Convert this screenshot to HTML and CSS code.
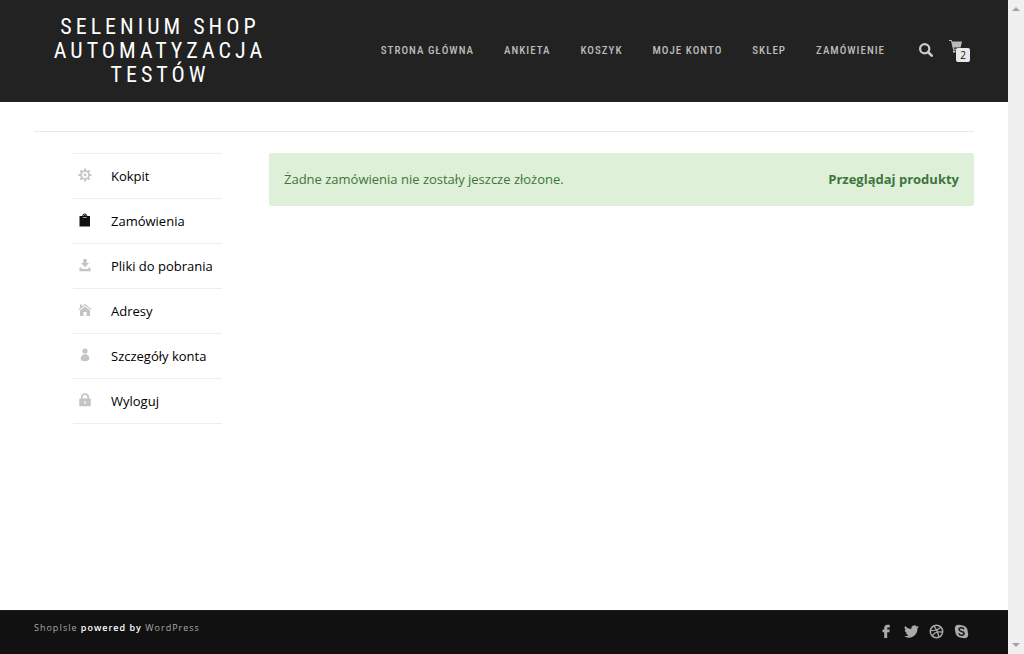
FILE: index.html
```html
<!DOCTYPE html>
<html lang="pl">
<head>
<meta charset="utf-8">
<meta name="viewport" content="width=device-width, initial-scale=1">
<title>Zamówienia – Selenium Shop Automatyzacja Testów</title>
<link rel="stylesheet" href="styles.css">
</head>
<body>
<div class="page">
  <header class="site-header">
    <div class="container header-row">
      <h1 class="brand"><a href="#">Selenium Shop Automatyzacja Testów</a></h1>
      <nav class="main-nav" aria-label="Menu główne">
        <a href="#">Strona główna</a>
        <a href="#">Ankieta</a>
        <a href="#">Koszyk</a>
        <a href="#">Moje konto</a>
        <a href="#">Sklep</a>
        <a href="#">Zamówienie</a>
      </nav>
      <div class="header-tools">
        <button class="search-button" type="button" aria-label="Szukaj">
          <svg width="14" height="14" viewBox="0 0 14 14" fill="none" stroke="currentColor"><circle cx="5.7" cy="5.7" r="4.6" stroke-width="2.2"/><path d="M9 9l3.700 3.700" stroke-width="2.6" stroke-linecap="round"/></svg>
        </button>
        <a class="cart" href="#" aria-label="Koszyk">
          <svg width="13" height="13" viewBox="0 0 13 13" fill="currentColor"><path d="M0 0h2.6l.6 1.5H13L11.6 7.400H4.800l.3 1.300h6.500v1H4.100L2 1.100H0z"/><circle cx="5.200" cy="11.500" r="1.300"/><circle cx="10.600" cy="11.500" r="1.300"/></svg>
          <span class="cart-count">2</span>
        </a>
      </div>
    </div>
  </header>

  <main class="container content">
    <hr class="divider">
    <div class="account">
      <nav class="account-nav" aria-label="Konto">
        <a href="#"><svg class="icon" viewBox="0 0 14 14" fill="none" stroke="currentColor"><circle cx="7" cy="7" r="4" stroke-width="1.700"/><circle cx="7" cy="7" r="1.400" fill="currentColor" stroke="none"/><path stroke-width="2" d="M7 .5v2M7 11.500v2M.5 7h2M11.500 7h2M2.400 2.400l1.400 1.400M10.200 10.200l1.400 1.400M11.600 2.400l-1.400 1.400M3.800 10.200l-1.400 1.400"/></svg>Kokpit</a>
        <a class="current" href="#" aria-current="page"><svg class="icon" viewBox="0 0 14 14" fill="currentColor"><path d="M1.500 3h2.800C4.500 1.500 5.500.5 6.800.5S9 1.500 9.300 3H12v10.500H1.500z"/><path d="M4.800 4.500h4M5.500 3c.3-2 2.300-2 2.600 0" fill="none" stroke="#bbb" stroke-width=".8"/></svg>Zamówienia</a>
        <a href="#"><svg class="icon" viewBox="0 0 14 14" fill="currentColor"><path d="M5.300 1h3.400v4h2.300L7 9.300 3 5h2.300zM1.500 9.500h2V11h7V9.500h2V13.300h-11z"/></svg>Pliki do pobrania</a>
        <a href="#"><svg class="icon" viewBox="0 0 14 14" fill="currentColor"><path d="M2 1.500h2v1.800L7 .8l6.600 5.400-.7.900L7 2.300 1.100 7.100l-.7-.9L2 4.900z"/><path d="M7 3.500l5 4.100V13H8.500V9h-3v4H2V7.600z"/></svg>Adresy</a>
        <a href="#"><svg class="icon" viewBox="0 0 14 14" fill="currentColor"><circle cx="7" cy="3" r="2.600"/><path d="M2.700 10.500C2.700 8 4.500 6.300 7 6.300s4.300 1.700 4.300 4.200c0 1.800-1.300 2.800-4.300 2.800s-4.300-1-4.300-2.800z"/></svg>Szczegóły konta</a>
        <a href="#"><svg class="icon" viewBox="0 0 14 14"><path d="M3.800 7V4.300C3.800 2.300 5.100 1 7 1s3.200 1.300 3.200 3.300V7" fill="none" stroke="currentColor" stroke-width="1.600"/><path fill="currentColor" fill-rule="evenodd" d="M1.300 5.500h11.500v7.800H1.300zM6.200 8.400v2.200h1.700V8.400z"/></svg>Wyloguj</a>
      </nav>
      <section class="notice" role="status">
        <span>Żadne zamówienia nie zostały jeszcze złożone.</span>
        <a href="#">Przeglądaj produkty</a>
      </section>
    </div>
  </main>

  <footer class="site-footer">
    <div class="container footer-row">
      <p class="credits"><a href="#">ShopIsle</a> powered by <a href="#">WordPress</a></p>
      <div class="social">
        <a href="#" aria-label="Facebook"><svg width="15" height="15" viewBox="0 0 15 15" fill="currentColor"><path d="M5.200 14V8.200H3.500V5.600h1.700V4C5.200 2 6.300.7 8.500.7h2.200v2.700H9.200c-.8 0-1 .3-1 1v1.200h2.500l-.3 2.600H8.200V14z"/></svg></a>
        <a href="#" aria-label="Twitter"><svg width="15" height="15" viewBox="0 0 24 24" fill="currentColor"><path d="M24 4.600a10 10 0 0 1-2.800.8 5 5 0 0 0 2.100-2.700 10 10 0 0 1-3.100 1.200 4.900 4.900 0 0 0-8.400 4.500A14 14 0 0 1 1.700 3.200a4.900 4.900 0 0 0 1.500 6.500 5 5 0 0 1-2.200-.6 4.900 4.900 0 0 0 3.900 4.900 5 5 0 0 1-2.200.1 4.900 4.900 0 0 0 4.600 3.400A10 10 0 0 1 0 19.500a14 14 0 0 0 21.500-12.400A10 10 0 0 0 24 4.600z"/></svg></a>
        <a href="#" aria-label="Dribbble"><svg width="15" height="15" viewBox="0 0 15 15" fill="none" stroke="currentColor" stroke-width="1.300"><circle cx="7.500" cy="7.500" r="6.200" stroke-width="1.500"/><path d="M5 1.900c2.600 3.200 4.100 6.600 4.900 11M1.400 6.700c4.300 0 8-.8 10.300-3.600M3.300 12C5 8.500 9 7.200 13.600 8.200"/></svg></a>
        <a href="#" aria-label="Skype"><svg width="15" height="15" viewBox="0 0 15 15" fill="currentColor"><circle cx="7.500" cy="7.500" r="6.200"/><circle cx="4.600" cy="4.600" r="3.800"/><circle cx="10.400" cy="10.400" r="3.800"/><path d="M10 5.400C9.600 4.200 8.700 3.800 7.500 3.800c-1.500 0-2.500.7-2.500 1.800 0 2.500 5.100 1.200 5.100 3.700 0 1.200-1.100 1.900-2.600 1.900-1.400 0-2.400-.6-2.700-1.800" fill="none" stroke="#111" stroke-width="1.400"/></svg></a>
      </div>
    </div>
  </footer>
</div>
<div class="scroll-track" aria-hidden="true">
  <svg width="8" height="4" viewBox="0 0 8 4"><path d="M0 4l4-4 4 4z"/></svg>
  <svg width="8" height="4" viewBox="0 0 8 4"><path d="M0 0h8L4 4z"/></svg>
</div>
</body>
</html>
```
FILE: styles.css
```css
* { box-sizing: border-box; }

body {
  display: flex;
  min-height: 100vh;
  margin: 0;
  background: #fff;
  color: #000;
  font: 13px/23px "Open Sans", sans-serif;
}

a { color: inherit; text-decoration: none; }
svg { display: block; }

.page {
  display: flex;
  flex: 1;
  flex-direction: column;
  min-width: 0;
}

.container {
  width: 100%;
  padding: 0 34px;
}

.site-header {
  padding: 15px 0;
  background: #222;
  color: #bbb;
  font-family: "Roboto Condensed", "Liberation Sans Narrow", Roboto, sans-serif;
  text-transform: uppercase;
}

.header-row {
  display: flex;
  align-items: center;
}

.brand {
  flex: 0 0 252px;
  margin: 0;
  color: #fff;
  font-size: 22px;
  font-weight: 400;
  line-height: 24px;
  letter-spacing: 4px;
  text-align: center;
}

.main-nav {
  display: flex;
  gap: 30px;
  margin-left: auto;
  font-size: 11px;
  font-weight: 500;
  line-height: 20px;
  letter-spacing: 1px;
  white-space: nowrap;
}

.header-tools {
  display: flex;
  align-items: center;
  gap: 16px;
  margin-left: 34px;
  padding: 0 4px 2px 0;
}

.search-button {
  padding: 0;
  border: 0;
  background: none;
  color: #ccc;
}

.cart {
  position: relative;
  width: 21px;
  height: 20px;
}

.cart-count {
  position: absolute;
  right: 0;
  bottom: -2px;
  width: 14px;
  height: 14px;
  border-radius: 2px;
  background: #e8e8e8;
  color: #111;
  font: 10px/14px "Open Sans", sans-serif;
  text-align: center;
}

.content { flex: 1; }

.divider {
  height: 1px;
  margin: 29px 0 21px;
  border: 0;
  background: #e8e8e8;
}

.account {
  display: flex;
  align-items: flex-start;
}

.account-nav {
  flex: 0 0 149px;
  margin: 0 47px 0 39px;
  border-top: 1px solid #eee;
}

.account-nav a {
  display: flex;
  align-items: center;
  gap: 19px;
  height: 45px;
  padding-left: 5px;
  border-bottom: 1px solid #eee;
  white-space: nowrap;
}

.icon {
  width: 14px;
  height: 14px;
  margin-bottom: 2px;
  color: #c4c4c4;
}

.current .icon { color: #111; }

.notice {
  display: flex;
  flex: 1;
  justify-content: space-between;
  padding: 15px;
  border-radius: 2px;
  background: #dff0d8;
  color: #3c763d;
}

.notice a { font-weight: 700; }

.site-footer {
  padding: 9px 0 15px;
  border-top: 1px solid #1c1c1c;
  background: #111;
  color: #fff;
}

.footer-row {
  display: flex;
  align-items: flex-start;
  justify-content: space-between;
}

.credits {
  margin: 0;
  font-size: 9px;
  font-weight: 600;
  line-height: 16px;
  letter-spacing: 1px;
}

.credits a { color: #aaa; font-weight: 400; }

.social {
  display: flex;
  gap: 10px;
  padding: 4px 5px 0 0;
  color: #aaa;
}

.scroll-track {
  display: flex;
  flex: 0 0 16px;
  flex-direction: column;
  align-items: center;
  justify-content: space-between;
  padding: 7px 0;
  background: #f0f0f0;
  fill: #a3a3a3;
}
```
